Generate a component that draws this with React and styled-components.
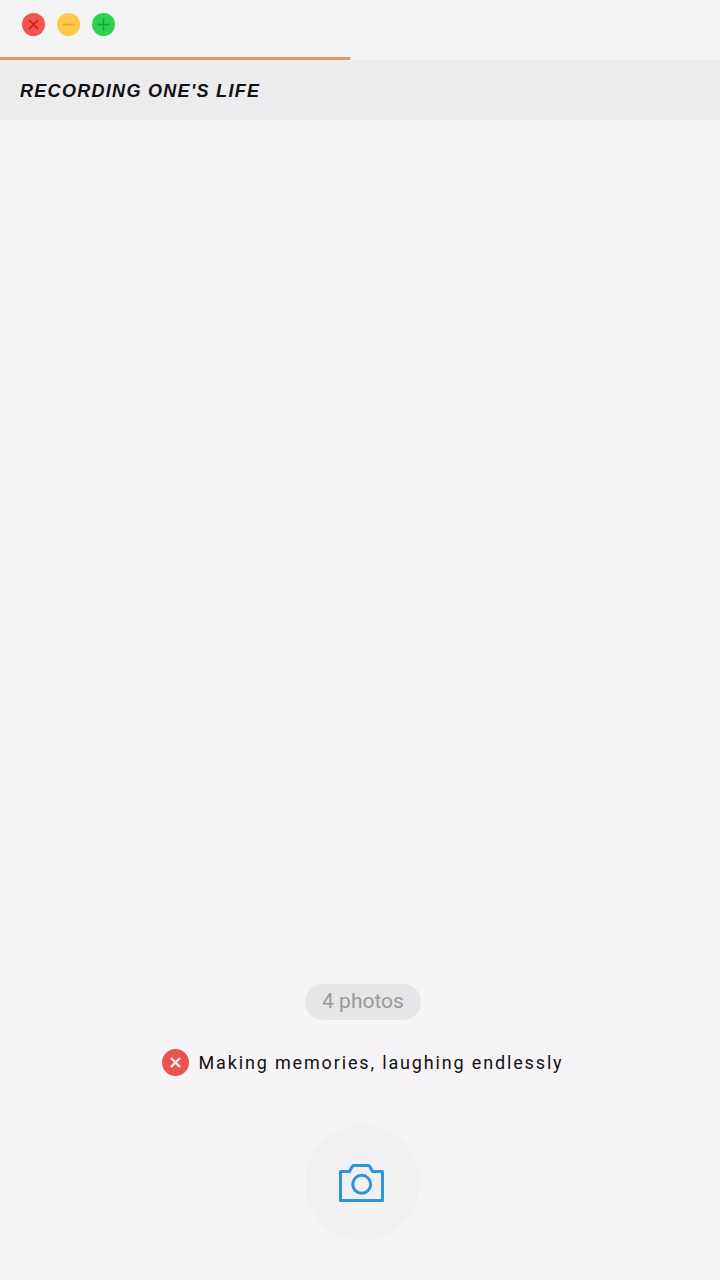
import React from "react";
import styled, { createGlobalStyle } from "styled-components";

const GlobalStyle = createGlobalStyle`
  html, body {
    margin: 0;
    padding: 0;
    background: #f6f4f6;
  }
`;

const Page = styled.div`
  display: flex;
  flex-direction: column;
  width: 720px;
  height: 1280px;
  overflow: hidden;
  background: #f6f4f6;
  font-family: "Liberation Sans", Arial, sans-serif;
`;

const TitleBar = styled.div`
  display: flex;
  align-items: center;
  gap: 12px;
  height: 57px;
  padding: 0 0 8px 22px;
  box-sizing: border-box;
  background: #f4f4f7;
`;

const WindowDot = styled.span`
  display: flex;
  align-items: center;
  justify-content: center;
  width: 23px;
  height: 23px;
  border-radius: 50%;
  background: ${(p) => p.$bg};
`;

const Progress = styled.div`
  height: 3px;
  background: #f4f4f7;
`;

const ProgressFill = styled.div`
  width: 350px;
  height: 100%;
  background: #e3995a;
`;

const Header = styled.div`
  display: flex;
  align-items: center;
  height: 60px;
  padding: 2px 0 0 20px;
  box-sizing: border-box;
  background: #ecebed;
`;

const Title = styled.h1`
  margin: 0;
  font-size: 18px;
  font-weight: 700;
  font-style: italic;
  letter-spacing: 1.3px;
  color: #111;
`;

const Spacer = styled.div`
  flex: 1;
`;

const Footer = styled.div`
  display: flex;
  flex-direction: column;
  align-items: center;
  padding-bottom: 40px;
`;

const CountPill = styled.div`
  display: flex;
  align-items: center;
  justify-content: center;
  width: 116px;
  height: 36px;
  margin-left: 6px;
  padding-bottom: 2px;
  box-sizing: border-box;
  border-radius: 18px;
  background: #e6e5e7;
  color: #9a999c;
  font-family: Roboto, sans-serif;
  font-size: 21px;
`;

const Caption = styled.div`
  display: flex;
  align-items: center;
  gap: 9px;
  margin-top: 28px;
  margin-left: 6px;
  height: 28px;
`;

const CloseBadge = styled.span`
  display: flex;
  align-items: center;
  justify-content: center;
  width: 27px;
  height: 27px;
  border-radius: 50%;
  background: #e9534f;
`;

const CaptionText = styled.span`
  font-family: Roboto, sans-serif;
  font-size: 18px;
  letter-spacing: 1.85px;
  color: #111;
`;

const ShutterButton = styled.button`
  display: flex;
  align-items: center;
  justify-content: center;
  width: 115px;
  height: 115px;
  margin-top: 49px;
  margin-left: 5px;
  padding: 0 2px 0 0;
  border: none;
  border-radius: 50%;
  background: #f1f0f2;
`;

const Glyph = ({ color, children }) => (
  <svg width="13" height="13" viewBox="0 0 13 13" fill="none" stroke={color} strokeWidth="1.5">
    {children}
  </svg>
);

const CameraIcon = () => (
  <svg width="45" height="38" viewBox="0 0 45 38" fill="none" stroke="#2f93e0" strokeWidth="3" strokeLinejoin="round">
    <path d="M1.500 7.500h9l2.500-4.500q.6-1.500 2-1.500h14q1.400 0 2 1.500l2.500 4.500h10v29h-42z" />
    <circle cx="22.700" cy="20.300" r="9" />
  </svg>
);

export default function App() {
  return (
    <Page>
      <GlobalStyle />
      <TitleBar>
        <WindowDot $bg="#f2544f">
          <Glyph color="#e0101c">
            <path d="M2 2l9 9M11 2l-9 9" />
          </Glyph>
        </WindowDot>
        <WindowDot $bg="#fbc94a">
          <Glyph color="#e3a83a">
            <path d="M0.500 6.500h12" />
          </Glyph>
        </WindowDot>
        <WindowDot $bg="#2fd154">
          <Glyph color="#14a83a">
            <path d="M0.500 6.500h12M6.500 0.500v12" />
          </Glyph>
        </WindowDot>
      </TitleBar>
      <Progress>
        <ProgressFill />
      </Progress>
      <Header>
        <Title>RECORDING ONE'S LIFE</Title>
      </Header>
      <Spacer />
      <Footer>
        <CountPill>4 photos</CountPill>
        <Caption>
          <CloseBadge>
            <Glyph color="#fbeeee">
              <path d="M2 2l9 9M11 2l-9 9" strokeWidth="2.400" />
            </Glyph>
          </CloseBadge>
          <CaptionText>Making memories, laughing endlessly</CaptionText>
        </Caption>
        <ShutterButton aria-label="Take photo">
          <CameraIcon />
        </ShutterButton>
      </Footer>
    </Page>
  );
}
